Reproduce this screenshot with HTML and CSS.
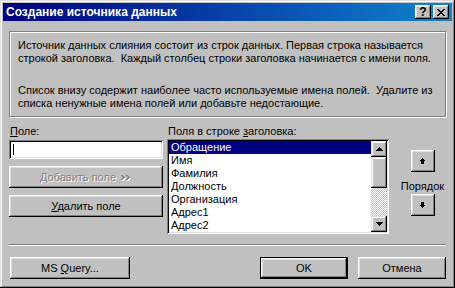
FILE: index.html
```html
<!DOCTYPE html>
<html lang="ru">
<head>
<meta charset="utf-8">
<title>Создание источника данных</title>
<link rel="stylesheet" href="styles.css">
</head>
<body>
<div class="window">
  <div class="titlebar">
    <span class="title">Создание источника данных</span>
    <div class="tb-buttons">
      <button class="tb-btn help">?</button>
      <button class="tb-btn close"><svg width="8" height="7" viewBox="0 0 8 7" shape-rendering="crispEdges"><path d="M0 0h2v1H0zM6 0h2v1H6zM1 1h2v1H1zM5 1h2v1H5zM2 2h4v1H2zM3 3h2v1H3zM2 4h4v1H2zM1 5h2v1H1zM5 5h2v1H5zM0 6h2v1H0zM6 6h2v1H6z" fill="#000"/></svg></button>
    </div>
  </div>
  <div class="body">
    <div class="info">
      <p>Источник данных слияния состоит из строк данных. Первая строка называется<br>строкой заголовка.&nbsp; Каждый столбец строки заголовка начинается с имени поля.</p>
      <p class="p2">Список внизу содержит наиболее часто используемые имена полей.&nbsp; Удалите из<br>списка ненужные имена полей или добавьте недостающие.</p>
    </div>
    <div class="middle">
      <div class="col-left">
        <div class="label"><u>П</u>оле:</div>
        <div class="field"><span class="caret"></span></div>
        <button class="btn wide disabled"><span><u>Д</u>обавить поле</span><svg class="chev" width="11" height="6" viewBox="0 0 11 6" shape-rendering="crispEdges"><path d="M1 1h2v1H1zM2 2h2v1H2zM3 3h2v1H3zM2 4h2v1H2zM1 5h2v1H1zM6 1h2v1H6zM7 2h2v1H7zM8 3h2v1H8zM7 4h2v1H7zM6 5h2v1H6z" fill="#fff"/><path d="M0 0h2v1H0zM1 1h2v1H1zM2 2h2v1H2zM1 3h2v1H1zM0 4h2v1H0zM5 0h2v1H5zM6 1h2v1H6zM7 2h2v1H7zM6 3h2v1H6zM5 4h2v1H5z" fill="#808080"/></svg></button>
        <button class="btn wide"><span><u>У</u>далить поле</span></button>
      </div>
      <div class="col-list">
        <div class="label">Поля в строке <u>з</u>аголовка:</div>
        <div class="listbox">
          <ul class="items">
            <li class="selected">Обращение</li>
            <li>Имя</li>
            <li>Фамилия</li>
            <li>Должность</li>
            <li>Организация</li>
            <li>Адрес1</li>
            <li>Адрес2</li>
          </ul>
          <div class="scrollbar">
            <div class="sb-btn"><svg width="7" height="4" viewBox="0 0 7 4" shape-rendering="crispEdges"><path d="M3 0h1v1H3zM2 1h3v1H2zM1 2h5v1H1zM0 3h7v1H0z" fill="#000"/></svg></div>
            <div class="sb-thumb"></div>
            <div class="sb-track"></div>
            <div class="sb-btn"><svg width="7" height="4" viewBox="0 0 7 4" shape-rendering="crispEdges"><path d="M0 0h7v1H0zM1 1h5v1H1zM2 2h3v1H2zM3 3h1v1H3z" fill="#000"/></svg></div>
          </div>
        </div>
      </div>
      <div class="col-order">
        <button class="btn small"><svg width="5" height="6" viewBox="0 0 5 6" shape-rendering="crispEdges"><path d="M2 0h1v1H2zM1 1h3v1H1zM0 2h5v1H0zM1 3h3v3H1z" fill="#000"/></svg></button>
        <div class="order-label">Порядок</div>
        <button class="btn small"><svg width="5" height="6" viewBox="0 0 5 6" shape-rendering="crispEdges"><path d="M1 0h3v3H1zM0 3h5v1H0zM1 4h3v1H1zM2 5h1v1H2z" fill="#000"/></svg></button>
      </div>
    </div>
    <div class="separator"></div>
    <div class="footer">
      <button class="btn query"><span>MS <u>Q</u>uery...</span></button>
      <button class="btn action default"><span>OK</span></button>
      <button class="btn action"><span>Отмена</span></button>
    </div>
  </div>
</div>
</body>
</html>
```

FILE: styles.css
```css
html, body {
  margin: 0;
  padding: 0;
  background: #c0c0c0;
}

body {
  font-family: "Liberation Sans", Arial, sans-serif;
  font-size: 11px;
  color: #000;
}

.window {
  width: 455px;
  height: 288px;
  box-sizing: border-box;
  padding: 3px;
  background: #c0c0c0;
  box-shadow: inset -1px -1px #000, inset 1px 1px #dfdfdf, inset -2px -2px #808080, inset 2px 2px #fff;
  display: flex;
  flex-direction: column;
}

.titlebar {
  height: 18px;
  flex: none;
  background: linear-gradient(90deg, #000080, #1084d0);
  display: flex;
  align-items: center;
  justify-content: space-between;
  padding: 0 3px 0 3px;
  color: #fff;
}

.title {
  font-weight: bold;
  font-size: 12px;
}

.tb-buttons {
  display: flex;
  gap: 2px;
}

.tb-btn {
  width: 16px;
  height: 14px;
  padding: 0;
  border: none;
  background: #c0c0c0;
  box-shadow: inset -1px -1px #000, inset 1px 1px #fff, inset -2px -2px #808080, inset 2px 2px #dfdfdf;
  display: flex;
  align-items: center;
  justify-content: center;
  font-family: "Liberation Sans", Arial, sans-serif;
  font-weight: bold;
  font-size: 12px;
  line-height: 12px;
  color: #000;
}

.body {
  flex: 1;
  padding: 10px 6px 0 6px;
  display: flex;
  flex-direction: column;
}

.info {
  height: 86px;
  box-sizing: border-box;
  border: 1px solid #808080;
  box-shadow: inset 1px 1px #fff, 1px 1px #fff;
  padding: 7px 8px 0 8px;
  line-height: 13px;
}

.info p {
  margin: 0;
  white-space: nowrap;
}

.info .p2 {
  margin-top: 19px;
}

.middle {
  display: flex;
  margin-top: 8px;
}

.label {
  height: 15px;
  line-height: 13px;
  padding-left: 1px;
  white-space: nowrap;
}

.col-left {
  width: 154px;
  display: flex;
  flex-direction: column;
}

.field {
  height: 19px;
  box-sizing: border-box;
  background: #fff;
  box-shadow: inset 1px 1px #808080, inset -1px -1px #fff, inset 2px 2px #000, inset -2px -2px #dfdfdf;
  display: flex;
  align-items: center;
  padding-left: 4px;
}

.caret {
  width: 1px;
  height: 11px;
  background: #000;
}

.btn {
  border: none;
  padding: 0;
  margin: 0;
  background: #c0c0c0;
  box-shadow: inset -1px -1px #000, inset 1px 1px #fff, inset -2px -2px #808080, inset 2px 2px #dfdfdf;
  font-family: "Liberation Sans", Arial, sans-serif;
  font-size: 11px;
  color: #000;
  display: flex;
  align-items: center;
  justify-content: center;
  box-sizing: border-box;
  white-space: nowrap;
}

.btn.wide {
  height: 22px;
  margin-top: 7px;
}

.btn.disabled {
  color: #808080;
  text-shadow: 1px 1px #fff;
}

.chev {
  margin-left: 5px;
  margin-top: 1px;
}

.col-list {
  width: 222px;
  margin-left: 4px;
  display: flex;
  flex-direction: column;
}

.listbox {
  height: 95px;
  box-sizing: border-box;
  padding: 2px;
  background: #fff;
  box-shadow: inset 1px 1px #808080, inset -1px -1px #fff, inset 2px 2px #000, inset -2px -2px #dfdfdf;
  display: flex;
  margin-top: -1px;
}

.items {
  list-style: none;
  margin: 0;
  padding: 0;
  flex: 1;
  overflow: hidden;
}

.items li {
  height: 13px;
  line-height: 13px;
  padding-left: 2px;
  white-space: nowrap;
}

.items li.selected {
  background: #000080;
  color: #fff;
}

.scrollbar {
  width: 16px;
  display: flex;
  flex-direction: column;
}

.sb-btn,
.sb-thumb {
  background: #c0c0c0;
  box-shadow: inset -1px -1px #000, inset 1px 1px #dfdfdf, inset -2px -2px #808080, inset 2px 2px #fff;
}

.sb-btn {
  height: 16px;
  display: flex;
  align-items: center;
  justify-content: center;
}

.sb-thumb {
  height: 31px;
}

.sb-track {
  flex: 1;
  background-image: conic-gradient(#fff 25%, #c0c0c0 0 50%, #fff 0 75%, #c0c0c0 0);
  background-size: 2px 2px;
}

.col-order {
  flex: 1;
  margin-left: 10px;
  display: flex;
  flex-direction: column;
  align-items: center;
}

.btn.small {
  width: 24px;
  height: 22px;
}

.col-order .btn.small:first-child {
  margin-top: 25px;
}

.order-label {
  margin-top: 8px;
  margin-bottom: 1px;
  line-height: 13px;
  white-space: nowrap;
}

.separator {
  margin-top: 10px;
  border-top: 1px solid #808080;
  border-bottom: 1px solid #fff;
}

.footer {
  display: flex;
  margin-top: 11px;
}

.btn.query {
  width: 120px;
  height: 22px;
  margin-left: 1px;
}

.btn.action {
  width: 88px;
  height: 22px;
}

.btn.default {
  margin-left: auto;
  margin-right: 10px;
  border: 1px solid #000;
}
```
